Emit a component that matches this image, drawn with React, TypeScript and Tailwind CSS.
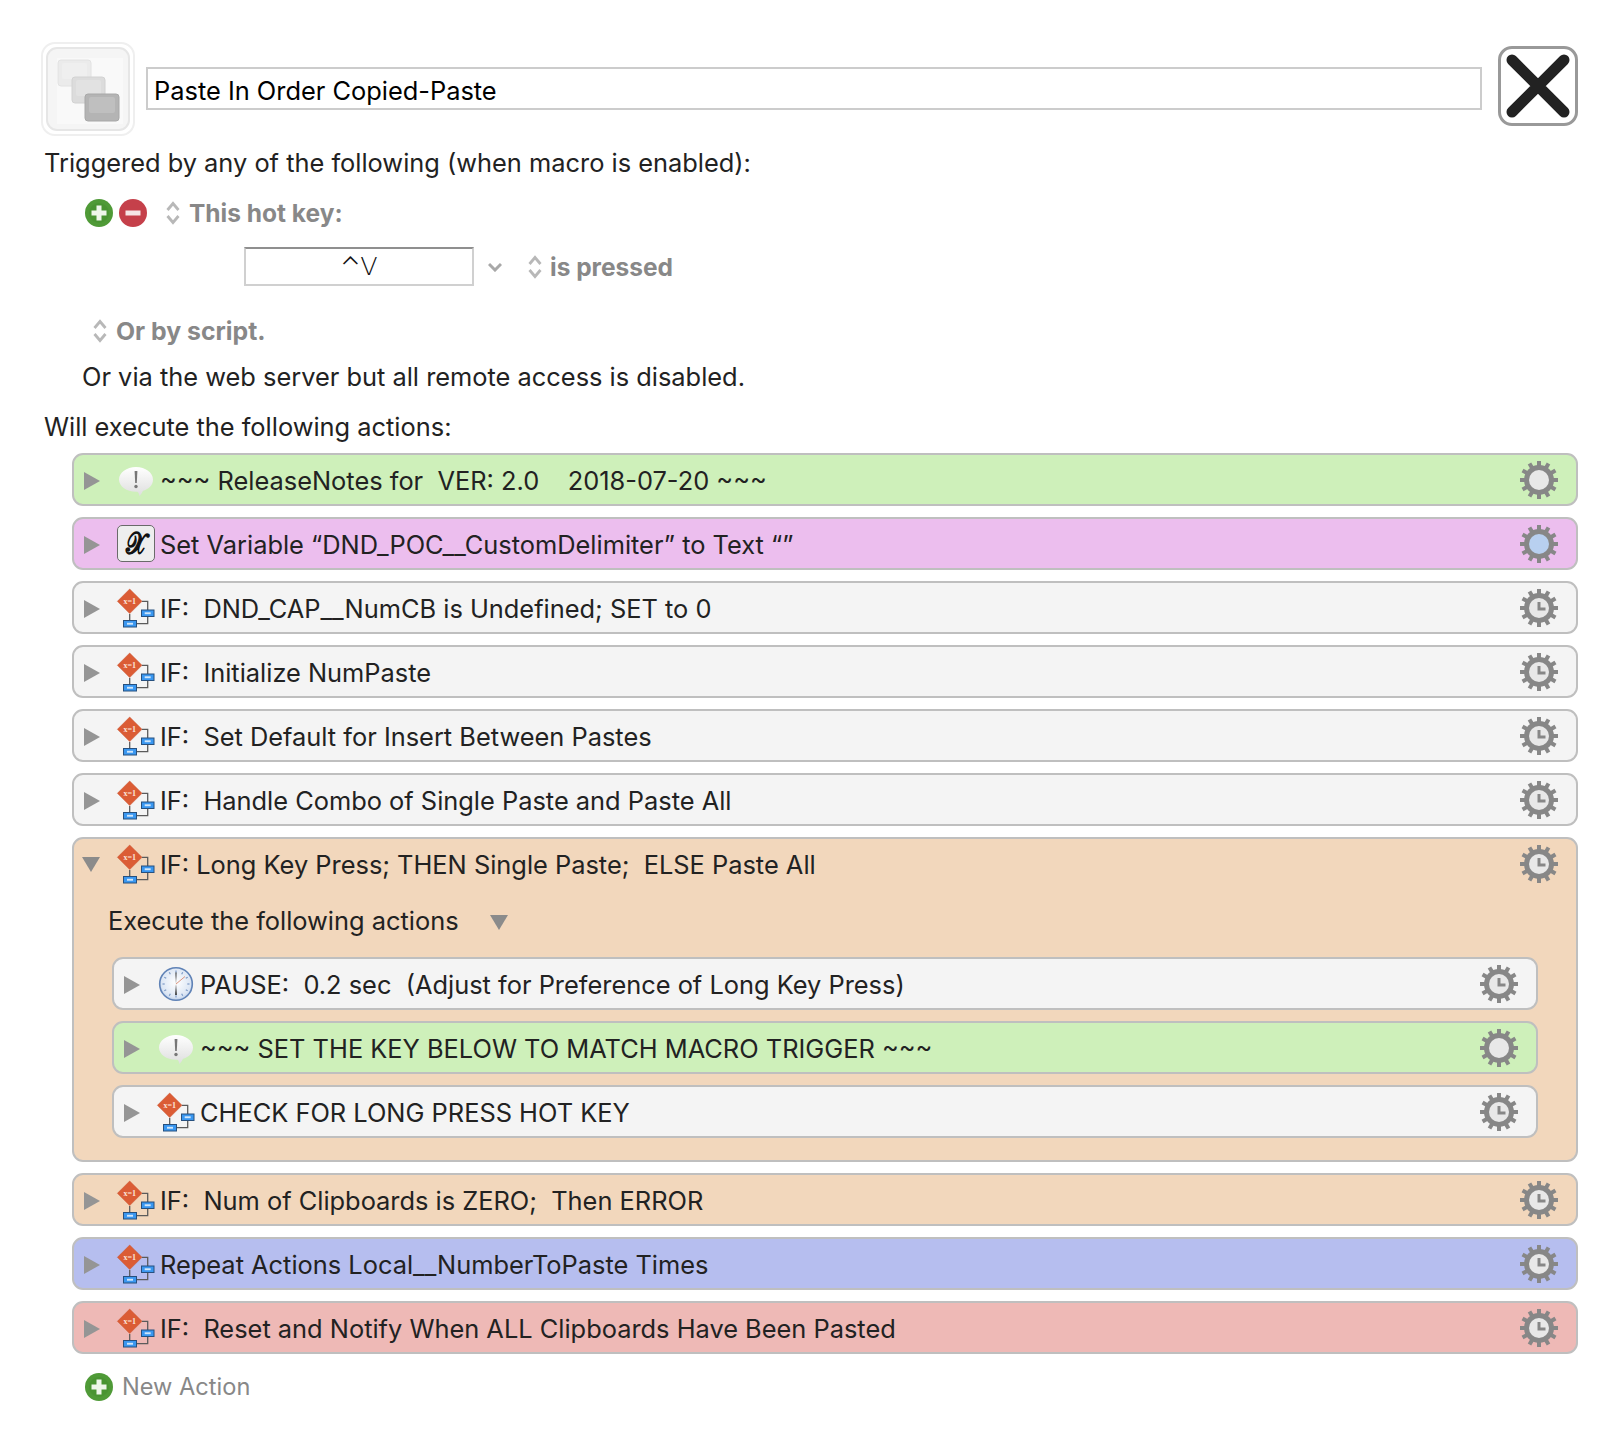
import React from "react";

const FONT = "font-['Inter','Liberation_Sans',sans-serif]";

function Gear({ inner = "#e8e8e8", clock = false }: { inner?: string; clock?: boolean }) {
  const teeth = Array.from({ length: 12 }, (_, i) => i * 30);
  return (
    <svg width="38" height="38" viewBox="0 0 38 38" className="shrink-0">
      {teeth.map((a) => (
        <rect key={a} x="17" y="0" width="4" height="8" fill="#878787" transform={`rotate(${a} 19 19)`} />
      ))}
      <circle cx="19" cy="19" r="15" fill="#878787" />
      <circle cx="19" cy="19" r="10" fill={inner} />
      {clock && <path d="M19 13V20H25.5" fill="none" stroke="#878787" strokeWidth="3" />}
    </svg>
  );
}

function Tri({ down = false }: { down?: boolean }) {
  return down ? (
    <svg width="18" height="16" viewBox="0 0 18 16" className="shrink-0 -ml-[2px]">
      <path d="M0 1H18L9 16Z" fill="#8b8b8b" />
    </svg>
  ) : (
    <svg width="16" height="18" viewBox="0 0 16 18" className="shrink-0 translate-y-px">
      <path d="M0 0L16 9L0 18Z" fill="#959595" />
    </svg>
  );
}

function IfIcon() {
  return (
    <svg width="40" height="44" viewBox="0 0 40 44" className="shrink-0">
      <path d="M26 15.3H31.7V37.7H20.7M13.7 28V34.3" fill="none" stroke="#5b5b5b" strokeWidth="1.3" />
      <path d="M13.7 3L26 15.3L13.7 27.6L1.4 15.3Z" fill="#db5c35" stroke="#c9532f" strokeWidth="0.5" />
      <text x="13.7" y="18" textAnchor="middle" fontSize="8" fontWeight="700" fill="#fbe6dc" fontFamily="Liberation Serif, serif">
        x=1
      </text>
      <rect x="25.5" y="24" width="12.5" height="6.5" fill="#3a97f0" stroke="#27507e" strokeWidth="1" />
      <rect x="28.7" y="26.3" width="6" height="1.9" fill="#cfe6fb" />
      <rect x="7.5" y="34.5" width="13" height="6.5" fill="#3a97f0" stroke="#27507e" strokeWidth="1" />
      <rect x="11" y="36.8" width="6" height="1.9" fill="#cfe6fb" />
    </svg>
  );
}

function AlertIcon() {
  return (
    <svg width="40" height="36" viewBox="0 -2 40 36" className="shrink-0">
      <defs>
        <linearGradient id="bub" x1="0" y1="0" x2="0" y2="1">
          <stop offset="0" stopColor="#ffffff" />
          <stop offset="1" stopColor="#dedede" />
        </linearGradient>
      </defs>
      <path d="M20 3C29.5 3 37 8.6 37 15.5C37 21.5 32 25.6 27 26.8C26.2 28.5 25 30.5 23.5 32C23.2 30 22.6 28.5 21.5 27.7C20.9 27.8 20.4 27.8 20 27.8C10.6 27.8 3 22.4 3 15.5C3 8.6 10.6 3 20 3Z" fill="url(#bub)" />
      <path d="M18.6 7H21.4L20.8 19H19.2Z" fill="#777777" />
      <circle cx="20" cy="22.5" r="1.7" fill="#777777" />
    </svg>
  );
}

function VarIcon() {
  return (
    <div className="w-[38px] h-[37px] ml-px mr-px shrink-0 rounded-[5px] border border-[#6a6a6a] bg-[#eeeeee] flex items-center justify-center overflow-hidden">
      <span className="font-['DejaVu_Serif','Liberation_Serif',serif] text-[24px] leading-none text-[#111] [-webkit-text-stroke:1.1px_#111] scale-y-125">𝒳</span>
    </div>
  );
}

function ClockIcon() {
  return (
    <svg width="40" height="36" viewBox="0 0 40 36" className="shrink-0">
      <defs>
        <radialGradient id="clk" cx="0.5" cy="0.45" r="0.6">
          <stop offset="0" stopColor="#ffffff" />
          <stop offset="0.75" stopColor="#dce6f4" />
          <stop offset="1" stopColor="#a9c0e2" />
        </radialGradient>
      </defs>
      <circle cx="20" cy="18" r="16.3" fill="url(#clk)" stroke="#5f82b6" strokeWidth="1.6" />
      {Array.from({ length: 12 }, (_, i) => i * 30).map((a) => (
        <rect key={a} x="19.4" y="4.5" width="1.2" height="2.2" fill="#7d9ac6" transform={`rotate(${a} 20 18)`} />
      ))}
      <path d="M20 18L19.4 6.5H20.6Z" fill="#333" />
      <path d="M20 18L19.1 29H20.9Z" fill="#333" />
      <path d="M20 18L29 10.5" stroke="#d9886f" strokeWidth="0.9" />
    </svg>
  );
}

function Row({
  bg,
  icon,
  text,
  inner,
  clock = true,
}: {
  bg: string;
  icon: React.ReactNode;
  text: string;
  inner?: string;
  clock?: boolean;
}) {
  return (
    <div className={`h-[53px] rounded-[11px] border-2 border-[#bfbfbf] flex items-center pl-[10px] pr-[18px] ${bg}`}>
      <Tri />
      <div className="ml-[16px] w-[40px] flex items-center justify-center shrink-0">{icon}</div>
      <span className="ml-[4px] pt-[3px] flex-1 whitespace-pre text-[#222]">{text}</span>
      <Gear inner={inner} clock={clock} />
    </div>
  );
}

function UpDown() {
  return (
    <svg width="14" height="24" viewBox="0 0 14 24" className="shrink-0">
      <path d="M1.5 9L7 2.5L12.5 9M1.5 15L7 21.5L12.5 15" fill="none" stroke="#b8b8b8" strokeWidth="2.8" />
    </svg>
  );
}

function PlusBtn() {
  return (
    <svg width="28" height="28" viewBox="0 0 28 28" className="shrink-0">
      <circle cx="14" cy="14" r="14" fill="#4f9a37" />
      <circle cx="14" cy="14" r="10" fill="#3f8a2b" opacity="0.35" />
      <path d="M14 6.5V21.5M6.5 14H21.5" stroke="#eef6ea" strokeWidth="5" />
    </svg>
  );
}

function MinusBtn() {
  return (
    <svg width="28" height="28" viewBox="0 0 28 28" className="shrink-0">
      <circle cx="14" cy="14" r="14" fill="#c5404a" />
      <path d="M6.5 14H21.5" stroke="#f6e6e6" strokeWidth="5" />
    </svg>
  );
}

function AppIcon() {
  return (
    <div className="w-[94px] h-[94px] rounded-[14px] border-2 border-[#efefef] p-[3px] shrink-0">
      <div className="w-full h-full rounded-[11px] border-2 border-[#e6e6e6] bg-[#f5f5f5] p-[9px]">
        <svg width="66" height="66" viewBox="0 0 66 66" className="block">
          <rect x="0" y="0" width="66" height="66" fill="#f9f9f9" />
          <rect x="1" y="2" width="33" height="26" rx="3" fill="#ebebeb" stroke="#e2e2e2" />
          <rect x="5" y="5" width="25" height="16" rx="2" fill="#efefef" />
          <rect x="15" y="19" width="33" height="26" rx="3" fill="#dcdcdc" stroke="#d2d2d2" />
          <rect x="19" y="22" width="25" height="16" rx="2" fill="#e2e2e2" />
          <rect x="28" y="36" width="34" height="27" rx="3" fill="#b4b4b4" stroke="#a8a8a8" />
          <rect x="32" y="39" width="26" height="16" rx="2" fill="#bfbfbf" />
        </svg>
      </div>
    </div>
  );
}

export default function App() {
  return (
    <div className={`w-[1618px] h-[1442px] bg-white text-[#222] text-[25.4px] leading-[30px] ${FONT}`}>
      <div className="flex pt-[42px] pl-[41px]">
        <AppIcon />
        <div className="ml-[11px] mt-[25px] w-[1336px] h-[43px] border-2 border-[#cccccc] pl-[6px] pt-[7px] text-black">
          Paste In Order Copied-Paste
        </div>
        <div className="ml-[16px] mt-[4px] w-[80px] h-[80px] rounded-[14px] border-[3px] border-[#999999] bg-white shrink-0">
          <svg width="74" height="74" viewBox="3 3 74 74" className="block">
            <path d="M14 14L66 66M66 14L14 66" stroke="#222" strokeWidth="11" strokeLinecap="round" />
          </svg>
        </div>
      </div>

      <div className="mt-[12px] ml-[44px] h-[30px]">Triggered by any of the following (when macro is enabled):</div>

      <div className="mt-[20px] ml-[85px] h-[30px] flex items-center">
        <PlusBtn />
        <div className="ml-[6px]">
          <MinusBtn />
        </div>
        <div className="ml-[19px]">
          <UpDown />
        </div>
        <span className="ml-[9px] font-bold text-[24.5px] text-[#888888]">This hot key:</span>
      </div>

      <div className="mt-[20px] ml-[244px] h-[38px] flex items-center">
        <div className="w-[230px] h-[39px] border-2 border-[#d0d0d0] border-t-[#8f8f8f] flex items-center justify-center text-[#111] -mt-[2px] font-['DejaVu_Sans','Inter',sans-serif] font-light">
          ⌃V
        </div>
        <svg width="14" height="10" viewBox="0 0 14 10" className="ml-[14px] shrink-0">
          <path d="M1 2L7 8L13 2" fill="none" stroke="#a8a8a8" strokeWidth="3" />
        </svg>
        <div className="ml-[26px]">
          <UpDown />
        </div>
        <span className="ml-[8px] font-bold text-[24.5px] text-[#888888]">is pressed</span>
      </div>

      <div className="mt-[30px] ml-[93px] h-[30px] flex items-center">
        <UpDown />
        <span className="ml-[9px] font-bold text-[24.8px] text-[#888888]">Or by script.</span>
      </div>

      <div className="mt-[16px] ml-[82px] h-[30px]">Or via the web server but all remote access is disabled.</div>
      <div className="mt-[20px] ml-[44px] h-[30px]">Will execute the following actions:</div>

      <div className="mt-[11px] ml-[72px] w-[1506px] flex flex-col gap-[11px]">
        <Row bg="bg-[#cef0ba]" icon={<AlertIcon />} text="~~~ ReleaseNotes for  VER: 2.0    2018-07-20 ~~~" clock={false} />
        <Row bg="bg-[#ecbeee]" icon={<VarIcon />} text="Set Variable “DND_POC__CustomDelimiter” to Text “”" clock={false} inner="#b8d0f0" />
        <Row bg="bg-[#f4f4f4]" icon={<IfIcon />} text="IF:  DND_CAP__NumCB is Undefined; SET to 0" />
        <Row bg="bg-[#f4f4f4]" icon={<IfIcon />} text="IF:  Initialize NumPaste" />
        <Row bg="bg-[#f4f4f4]" icon={<IfIcon />} text="IF:  Set Default for Insert Between Pastes" />
        <Row bg="bg-[#f4f4f4]" icon={<IfIcon />} text="IF:  Handle Combo of Single Paste and Paste All" />

        <div className="h-[325px] rounded-[11px] border-2 border-[#bfbfbf] bg-[#f2d7bc]">
          <div className="h-[49px] flex items-center pl-[10px] pr-[18px]">
            <Tri down />
            <div className="ml-[16px] w-[40px] flex items-center justify-center shrink-0">
              <IfIcon />
            </div>
            <span className="ml-[4px] pt-[3px] flex-1 whitespace-pre">IF: Long Key Press; THEN Single Paste;  ELSE Paste All</span>
            <Gear clock />
          </div>
          <div className="mt-[18px] ml-[34px] h-[30px] flex items-center">
            <span>Execute the following actions</span>
            <svg width="18" height="16" viewBox="0 0 18 16" className="ml-[31px] shrink-0 translate-y-px">
              <path d="M0 1H18L9 16Z" fill="#8b8b8b" />
            </svg>
          </div>
          <div className="mt-[21px] ml-[38px] mr-[38px] flex flex-col gap-[11px]">
            <Row bg="bg-[#f4f4f4]" icon={<ClockIcon />} text="PAUSE:  0.2 sec  (Adjust for Preference of Long Key Press)" />
            <Row bg="bg-[#cef0ba]" icon={<AlertIcon />} text="~~~ SET THE KEY BELOW TO MATCH MACRO TRIGGER ~~~" clock={false} />
            <Row bg="bg-[#f4f4f4]" icon={<IfIcon />} text="CHECK FOR LONG PRESS HOT KEY" />
          </div>
        </div>

        <Row bg="bg-[#f2d7bc]" icon={<IfIcon />} text="IF:  Num of Clipboards is ZERO;  Then ERROR" />
        <Row bg="bg-[#b6beef]" icon={<IfIcon />} text="Repeat Actions Local__NumberToPaste Times" />
        <Row bg="bg-[#eeb9b6]" icon={<IfIcon />} text="IF:  Reset and Notify When ALL Clipboards Have Been Pasted" />
      </div>

      <div className="mt-[18px] ml-[85px] flex items-center">
        <PlusBtn />
        <span className="ml-[9px] text-[23.6px] text-[#888888]">New Action</span>
      </div>
    </div>
  );
}
